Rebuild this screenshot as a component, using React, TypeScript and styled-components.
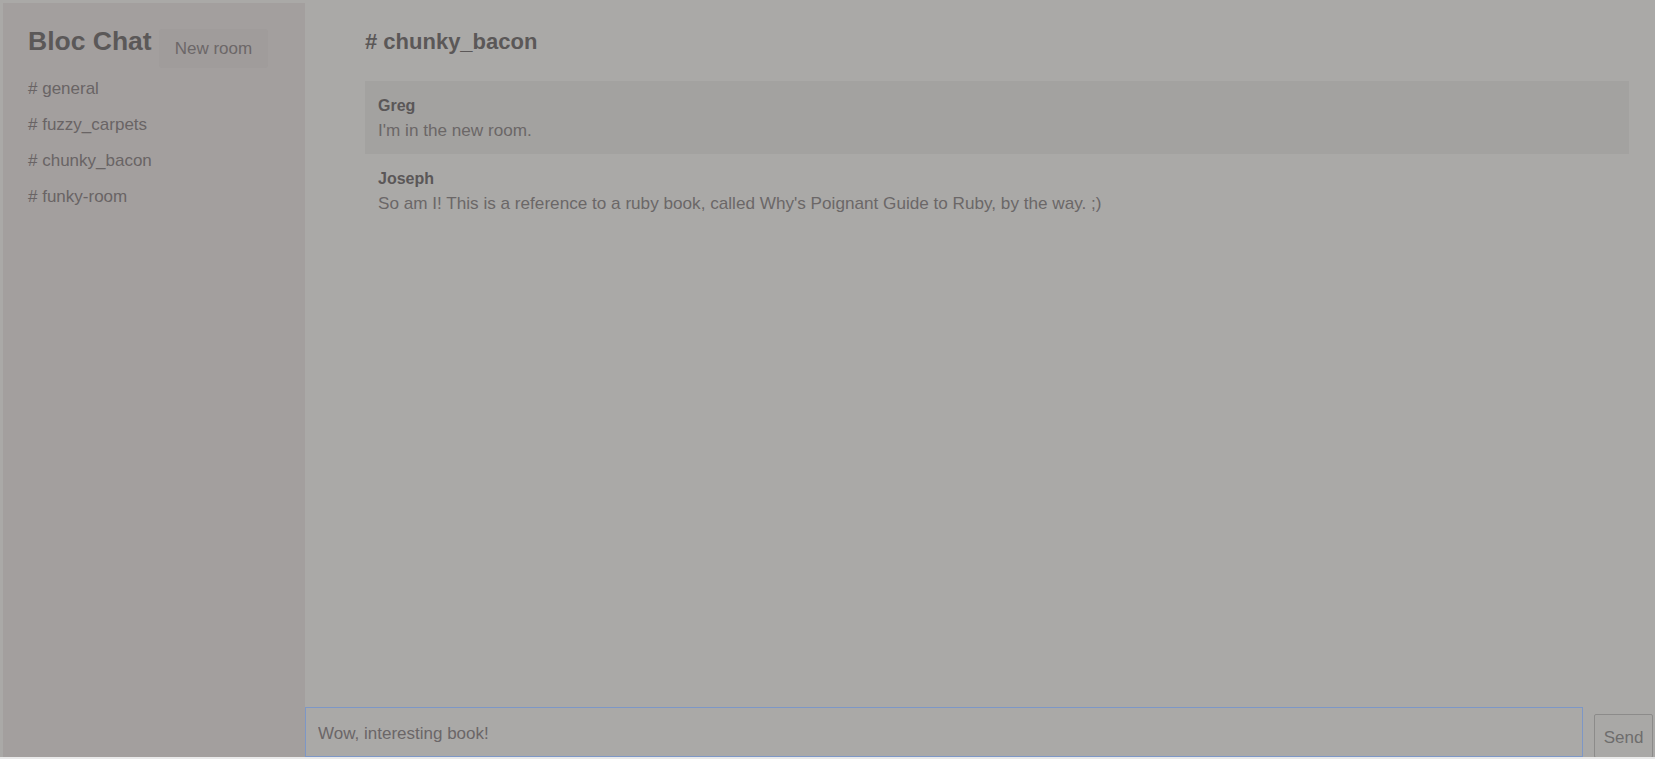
import React from "react";
import styled, { createGlobalStyle } from "styled-components";

const GlobalStyle = createGlobalStyle`
  html, body {
    margin: 0;
    padding: 0;
    background: #e9e9e9;
    font-family: "Liberation Sans", Arial, sans-serif;
  }
  * { box-sizing: border-box; }
`;

const Page = styled.div`
  display: flex;
  height: 757px;
  padding: 3px 0 0 3px;
  background: #aaa9a7;
  overflow: hidden;
`;

const Sidebar = styled.aside`
  flex: 0 0 302px;
  display: flex;
  flex-direction: column;
  padding: 22px 0 0 25px;
  background: #a39f9e;
`;

const SidebarHeader = styled.div`
  display: flex;
  align-items: flex-start;
  gap: 7px;
`;

const Brand = styled.h1`
  margin: 0;
  font-size: 26.5px;
  line-height: 32px;
  font-weight: 700;
  color: #5b5858;
  white-space: nowrap;
`;

const NewRoomButton = styled.button`
  margin-top: 4px;
  height: 39px;
  padding: 1px 16px 0;
  border: none;
  border-radius: 3px;
  background: #a09c9b;
  color: #6c6768;
  font-family: inherit;
  font-size: 17px;
  cursor: pointer;
`;

const RoomList = styled.ul`
  list-style: none;
  margin: 3px 0 0;
  padding: 0;
`;

const RoomItem = styled.li`
  font-size: 17px;
  line-height: 36px;
  color: #696465;
`;

const Main = styled.main`
  flex: 1;
  display: flex;
  flex-direction: column;
  min-width: 0;
`;

const Content = styled.div`
  flex: 1;
  padding: 25px 26px 0 60px;
`;

const RoomTitle = styled.h2`
  margin: 0 0 25px;
  font-size: 22px;
  line-height: 28px;
  font-weight: 700;
  color: #5b5858;
`;

const MessageList = styled.div`
  display: flex;
  flex-direction: column;
`;

const Message = styled.div<{ $shaded?: boolean }>`
  padding: 13px 13px 12px;
  background: ${(p) => (p.$shaded ? "#a3a2a0" : "transparent")};
`;

const Author = styled.div`
  font-size: 16px;
  line-height: 24px;
  font-weight: 700;
  color: #5a5758;
`;

const Body = styled.div`
  font-size: 17.15px;
  line-height: 24px;
  color: #6b6767;
`;

const Composer = styled.form`
  display: flex;
  align-items: flex-start;
  gap: 11px;
  height: 50px;
  padding-right: 2px;
`;

const MessageInput = styled.input`
  flex: 1;
  height: 50px;
  padding: 3px 12px 0;
  border: 1px solid #7d97c6;
  background: #aaa9a7;
  color: #6b6667;
  font-family: inherit;
  font-size: 17px;
  outline: none;
`;

const SendButton = styled.button`
  flex: 0 0 59px;
  margin-top: 7px;
  height: 44px;
  padding: 3px 0 0;
  border: 1px solid #8c8b8a;
  border-radius: 2px;
  background: #a9a8a6;
  color: #6e6d6d;
  font-family: inherit;
  font-size: 17px;
`;

const rooms = ["general", "fuzzy_carpets", "chunky_bacon", "funky-room"];

const messages = [
  { author: "Greg", text: "I'm in the new room." },
  {
    author: "Joseph",
    text: "So am I! This is a reference to a ruby book, called Why's Poignant Guide to Ruby, by the way. ;)",
  },
];

export default function App() {
  return (
    <>
      <GlobalStyle />
      <Page>
        <Sidebar>
          <SidebarHeader>
            <Brand>Bloc Chat</Brand>
            <NewRoomButton type="button">New room</NewRoomButton>
          </SidebarHeader>
          <RoomList>
            {rooms.map((r) => (
              <RoomItem key={r}># {r}</RoomItem>
            ))}
          </RoomList>
        </Sidebar>
        <Main>
          <Content>
            <RoomTitle># chunky_bacon</RoomTitle>
            <MessageList>
              {messages.map((m, i) => (
                <Message key={i} $shaded={i === 0}>
                  <Author>{m.author}</Author>
                  <Body>{m.text}</Body>
                </Message>
              ))}
            </MessageList>
          </Content>
          <Composer onSubmit={(e) => e.preventDefault()}>
            <MessageInput defaultValue="Wow, interesting book!" />
            <SendButton type="submit">Send</SendButton>
          </Composer>
        </Main>
      </Page>
    </>
  );
}
